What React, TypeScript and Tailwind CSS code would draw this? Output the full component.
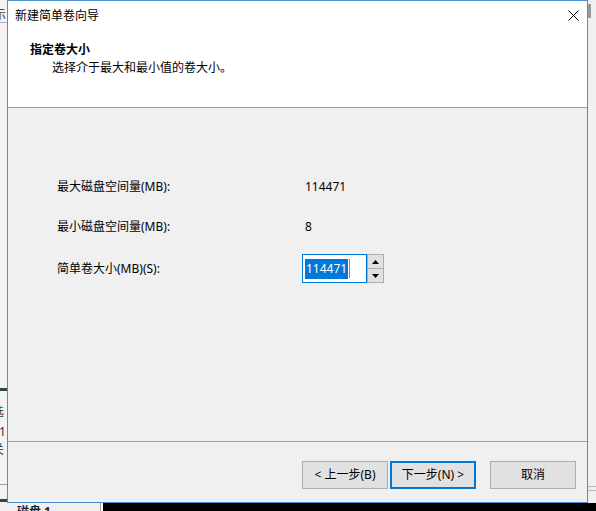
import React from 'react'

const font = "font-['Noto_Sans','Noto_Sans_CJK_SC',sans-serif]"

function Spinner() {
  return (
    <div className="flex h-[29px] w-[17px] flex-col border border-[#adadad] bg-[#e1e1e1]">
      <div className="flex flex-1 items-center justify-center border-b border-[#adadad]">
        <svg width="7" height="4" viewBox="0 0 7 4">
          <path d="M3.5 0 L7 4 L0 4 Z" fill="#000" />
        </svg>
      </div>
      <div className="flex flex-1 items-center justify-center">
        <svg width="7" height="4" viewBox="0 0 7 4">
          <path d="M0 0 L7 0 L3.5 4 Z" fill="#000" />
        </svg>
      </div>
    </div>
  )
}

function Button({ label, focused }: { label: string; focused?: boolean }) {
  return (
    <button
      className={`flex h-[28px] w-[86px] items-center justify-center bg-[#e1e1e1] text-[12px] text-black ${
        focused ? 'border-2 border-[#0078d7]' : 'border border-[#adadad]'
      }`}
    >
      {label}
    </button>
  )
}

export default function App() {
  return (
    <div className={`flex h-[511px] w-[596px] flex-col overflow-hidden bg-[#f0f0f0] ${font} text-[12px] text-black`}>
      <div className="flex h-[503px]">
        {/* background window, left edge */}
        <div className="flex w-[7px] flex-col overflow-hidden bg-[#f3f3f3]">
          <div className="ml-[-6px] mt-[8px] h-[14px] leading-[14px] text-[#444]">示</div>
          <div className="h-px bg-[#b0b0b0]" />
          <div className="mt-[365px] h-[3px] bg-[#2d4a37]" />
          <div className="ml-[-8px] mt-[13px] h-[16px] leading-[16px] text-[#333]">选</div>
          <div className="ml-[-1px] mt-[4px] h-[16px] leading-[16px] text-[#333]">1</div>
          <div className="ml-[-8px] mt-[2px] h-[16px] leading-[16px] text-[#333]">关</div>
          <div className="mt-[26px] h-px bg-[#a0a0a0]" />
          <div className="mt-[14px] h-[3px] bg-[#2d4a37]" />
        </div>

        {/* dialog */}
        <div className="flex w-[581px] flex-col border border-[#4a8fd0]">
          <div className="h-[106px] bg-white">
            <div className="flex h-[30px] items-center justify-between pl-[7px] pr-[8px]">
              <span className="leading-[16px]">新建简单卷向导</span>
              <svg width="11" height="11" viewBox="0 0 11 11" className="mt-[-1px]">
                <path d="M0.5 0.5 L10.5 10.5 M10.5 0.5 L0.5 10.5" stroke="#000" strokeWidth="1" />
              </svg>
            </div>
            <div className="mt-[11px] pl-[22px] font-bold leading-[16px]">指定卷大小</div>
            <div className="mt-[2px] pl-[44px] leading-[16px]">选择介于最大和最小值的卷大小。</div>
          </div>
          <div className="h-px bg-[#a0a0a0]" />

          <div className="h-[333px] bg-[#f0f0f0] pl-[49px] pt-[71px]">
            <div className="flex h-[16px] items-center leading-[16px]">
              <span className="w-[248px]">最大磁盘空间量(MB):</span>
              <span>114471</span>
            </div>
            <div className="mt-[24px] flex h-[16px] items-center leading-[16px]">
              <span className="w-[248px]">最小磁盘空间量(MB):</span>
              <span>8</span>
            </div>
            <div className="mt-[19px] flex h-[29px] items-center">
              <span className="w-[245px] leading-[16px]">简单卷大小(MB)(S):</span>
              <div className="flex">
                <div className="flex h-[29px] w-[65px] items-center border border-[#0078d7] bg-white pl-[2px]">
                  <span className="bg-[#0078d7] px-px leading-[20px] text-white">114471</span>
                  <span className="ml-px h-[19px] w-px bg-[#e07a1f]" />
                </div>
                <Spinner />
              </div>
            </div>
          </div>

          <div className="h-px bg-[#a0a0a0]" />
          <div className="flex h-[60px] items-start justify-end bg-[#f0f0f0] pr-[11px] pt-[19px]">
            <Button label="< 上一步(B)" />
            <div className="ml-[2px]">
              <Button label="下一步(N) >" focused />
            </div>
            <div className="ml-[14px]">
              <Button label="取消" />
            </div>
          </div>
        </div>

        {/* background window, right edge */}
        <div className="flex w-[8px] flex-col bg-[#f0f0f0]">
          <div className="mt-[4px] h-[14px] w-[3px] bg-[#9a9a9a]" />
          <div className="mt-[468px] h-px bg-[#b8b8b8]" />
          <div className="mt-[3px] h-px bg-[#b8b8b8]" />
        </div>
      </div>

      {/* background window, bottom edge */}
      <div className="flex h-[8px]">
        <div className="w-[100px] overflow-hidden bg-[#f0f0f0] pl-[17px]">
          <span className="font-bold leading-[14px] text-[#222]">磁盘 1</span>
        </div>
        <div className="w-px bg-[#a0a0a0]" />
        <div className="w-[2px] bg-white" />
        <div className="flex-1 bg-black" />
      </div>
    </div>
  )
}
